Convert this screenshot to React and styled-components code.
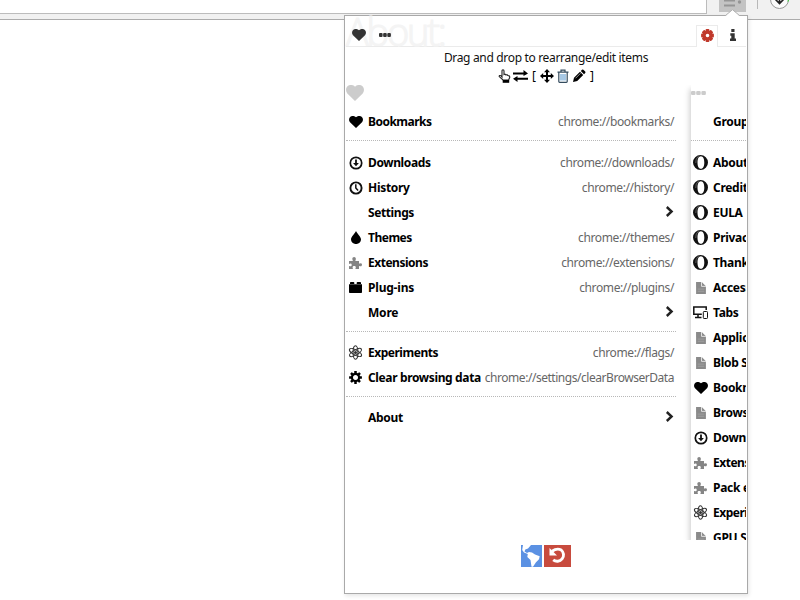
import React from "react";
import styled, { createGlobalStyle } from "styled-components";

const Global = createGlobalStyle`
  * { box-sizing: border-box; }
  body { margin: 0; background: #fff; overflow: hidden; }
`;

const Page = styled.div`
  width: 800px;
  height: 600px;
  overflow: hidden;
  position: relative;
  background: #fff;
  font: 12px/23px "Noto Sans", "Open Sans", sans-serif;
  color: #000;
`;
const Browser = styled.div`
  display: flex;
  height: 20px;
  background: #f1f1f1;
  border-bottom: 1px solid #acacac;
`;
const Address = styled.div`
  width: 707px;
  height: 14px;
  background: #fff;
  border: solid #bcbcbc;
  border-width: 0 1px 1px 0;
`;
const ToolIcons = styled.svg`
  display: block;
  width: 93px;
  height: 19px;
`;
const Popup = styled.div`
  position: absolute;
  left: 344px;
  top: 15px;
  width: 404px;
  height: 579px;
  background: #fff;
  border: 1px solid #a9a9a9;
  box-shadow: 1px 2px 4px rgba(0, 0, 0, 0.1);
  padding: 0 1px;
`;
const Pointer = styled.svg`
  position: absolute;
  left: 380px;
  top: -7px;
  display: block;
`;
const Header = styled.div`
  position: relative;
  display: flex;
  height: 31px;
`;
const Watermark = styled.div`
  position: absolute;
  left: 0;
  top: 0;
  font: 300 38px/30px "Open Sans", "Noto Sans", sans-serif;
  letter-spacing: -2.2px;
  -webkit-text-stroke: 1.2px #f4f4f4;
  color: #f4f4f4;
`;
const Tab = styled.div`
  position: relative;
  display: flex;
  justify-content: center;
  align-items: center;
  width: ${(p) => p.$w}px;
  height: ${(p) => (p.$active ? 22 : 31)}px;
  margin-top: ${(p) => (p.$active ? 9 : 0)}px;
  padding-top: ${(p) => (p.$active ? 0 : 8)}px;
  padding-bottom: ${(p) => (p.$active ? 2 : 0)}px;
  padding-left: ${(p) => p.$shift || 0}px;
  border: solid #ebebeb;
  border-width: ${(p) => (p.$active ? "1px 1px 0" : "0 0 1px")};
`;
const Spacer = styled.div`
  flex: 1;
  border-bottom: 1px solid #ebebeb;
`;
const Hint = styled.div`
  height: 19px;
  margin-top: 1px;
  line-height: 20px;
  text-align: center;
  color: #111;
  letter-spacing: ${(p) => p.$ls || 0}px;
`;
const Tools = styled.div`
  display: flex;
  justify-content: center;
  align-items: center;
  height: 18px;
  gap: 2px;
  padding-left: 2px;
  line-height: 16px;
  & > span { width: 8px; text-align: center; }
`;
const Lists = styled.div`
  display: flex;
  height: 455px;
  overflow: hidden;
`;
const List = styled.div`
  width: ${(p) => (p.$side ? 55 : 330)}px;
  margin-left: ${(p) => (p.$side ? 15 : 0)}px;
  flex: none;
  ${(p) => p.$side && "box-shadow: -1px 4px 6px rgba(0,0,0,.22);"}
`;
const ListHead = styled.div`
  height: 25px;
  padding-top: ${(p) => p.$top}px;
  svg { display: block; }
`;
const Row = styled.div`
  display: flex;
  align-items: center;
  height: 25px;
  padding: 0 2px 2px 0;
  white-space: nowrap;
`;
const IconBox = styled.span`
  width: 19px;
  height: 16px;
  flex: none;
  display: flex;
  justify-content: center;
  align-items: center;
  margin-right: 3px;
`;
const Label = styled.span`
  font-weight: 700;
  flex: 1 0 auto;
  letter-spacing: ${(p) => p.$ls}px;
`;
const Url = styled.span`
  color: #666;
  letter-spacing: ${(p) => p.$ls}px;
`;
const Divider = styled.div`
  height: ${(p) => p.$h}px;
  padding-top: 5px;
  &::before {
    content: "";
    display: block;
    border-top: 1px dotted #b8b8b8;
  }
`;
const Footer = styled.div`
  display: flex;
  justify-content: center;
  gap: 2px;
  padding: 5px 0 0;
  svg { display: block; }
`;

const Svg = ({ w = 14, h = 14, box, children, ...rest }) => (
  <svg width={w} height={h} viewBox={box || `0 0 ${w} ${h}`} fill="currentColor" {...rest}>{children}</svg>
);

const Heart = ({ w = 14, h = 12, color = "#000" }) => (
  <Svg w={w} h={h} box="0 0 14 12" preserveAspectRatio="none">
    <path fill={color} d="M7 1.3C5.5-.4 2.9-.4 1.4.8-.3 2.3-.4 4.600 1 6.300L7 12l6-5.700C14.400 4.600 14.300 2.300 12.600.8 11.100-.4 8.500-.4 7 1.300Z" />
  </Svg>
);
const Dots = ({ color, w = 12 }) => (
  <Svg w={w} h={4} box="0 0 12 4" preserveAspectRatio="none">
    {[0, 4.15, 8.3].map((x) => <rect key={x} x={x} y="0" width="3.600" height="4" rx="1" fill={color} />)}
  </Svg>
);
const Gear = ({ color = "#000", w = 13, round, hole = 2.2 }) => (
  <Svg w={w} h={w} box="-6.500 -6.500 13 13">
    <g fill={color}>
      {[0, 45, 90, 135, 180, 225, 270, 315].map((a) => (
        <rect key={a} x={round ? -1.9 : -1.25} y="-6.400" width={round ? 3.8 : 2.5} height="3.500" rx={round ? 0.9 : 0.2} transform={`rotate(${a})`} />
      ))}
      <path fillRule="evenodd" d={`M-4.700 0A4.700 4.700 0 1 0 4.700 0A4.700 4.700 0 1 0-4.700 0ZM${-hole} 0A${hole} ${hole} 0 1 0 ${hole} 0A${hole} ${hole} 0 1 0 ${-hole} 0Z`} />
    </g>
  </Svg>
);
const Info = () => (
  <Svg w={6} h={12}>
    <path fill="#333" d="M1.300 0h3.200v3h-3.200zM.3 4.300h4.400v5.200H6V12H0V9.500h1.300V6.700h-1z" />
  </Svg>
);
const Download = () => (
  <Svg>
    <circle cx="7" cy="7" r="5.700" fill="none" stroke="#111" strokeWidth="1.700" />
    <path fill="#111" d="M6.100 3.500h1.800v3.400h2L7 10.200 4.100 6.900h2z" />
  </Svg>
);
const Clock = () => (
  <Svg>
    <circle cx="7" cy="7" r="5.600" fill="none" stroke="#111" strokeWidth="1.900" />
    <path fill="none" stroke="#111" strokeWidth="1.500" d="M6.800 3.200V7l2.300 2.500" />
  </Svg>
);
const Drop = () => (
  <Svg w={10} h={13}>
    <path d="M5 0C5.600 2.200 10 5.500 10 8.500A4.700 4.500 0 0 1 5 13 4.700 4.500 0 0 1 0 8.500C0 5.500 4.400 2.200 5 0Z" />
  </Svg>
);
const Puzzle = () => (
  <Svg w={13} h={12}>
    <path fill="#858585" d="M0 4h3.700c.5-.6-.4-1.100-.4-2C3.300.7 4.100 0 5.100 0s1.800.7 1.800 2c0 .9-.8 1.400-.4 2H10v2.500c.6.400.9-.3 1.600-.3.900 0 1.400.7 1.400 1.600S12.500 9.300 11.600 9.300c-.8 0-1-.7-1.600-.3v3H6.500c-.3-.6.300-1 .3-1.600 0-.8-.7-1.300-1.600-1.300s-1.600.5-1.600 1.300c0 .6.600 1 .2 1.600H0V9c.6-.3.900.2 1.500.2.700 0 1.200-.5 1.200-1.300s-.5-1.300-1.200-1.300C.9 6.600.6 7.100 0 6.800Z" />
  </Svg>
);
const Plug = () => (
  <Svg w={13} h={11}>
    <path d="M1 2V.8Q1 0 1.800 0h2.700q.8 0 .8.800V2h2.400V.8Q7.700 0 8.500 0h2.700q.8 0 .8.800V2h1v8.200q0 .8-.8.800H.8Q0 11 0 10.200V2Z" />
    <path d="M0 2.500h13" stroke="#777" strokeWidth=".6" />
  </Svg>
);
const Atom = () => (
  <Svg w={15} h={15} box="-7 -7 14 14">
    <g fill="none" stroke="#333" strokeWidth="1.050">
      {[0, 60, 120].map((a) => <ellipse key={a} rx="2.300" ry="6.300" transform={`rotate(${a})`} />)}
    </g>
    <circle r="1.400" fill="#333" />
  </Svg>
);
const Opera = () => (
  <Svg w={15} h={15}>
    <path fill="#111" fillRule="evenodd" d="M7.500 0a7.500 7.500 0 1 1 0 15 7.500 7.500 0 0 1 0-15Zm.4 1.200C5.600 1.200 4.500 4 4.500 7.500s1.100 6.300 3.400 6.300 3.400-2.800 3.400-6.300-1.100-6.300-3.400-6.300Z" />
    <path fill="none" stroke="#fff" strokeWidth=".9" d="M5.500 1Q2.300 4 2.800 8" opacity=".35" />
  </Svg>
);
const Doc = () => (
  <Svg w={10} h={12} box="0 0 9 11">
    <path fill="#8a8a8a" d="M0 0h5.200L9 3.800V11H0Z" />
    <path fill="none" stroke="#fff" strokeWidth=".7" d="M5 0v4h4" />
    <path stroke="#aaa" strokeWidth=".6" d="M1.500 6.500h6M1.500 8.500h6" />
  </Svg>
);
const Devices = () => (
  <Svg w={15} h={13}>
    <path fill="none" stroke="#111" strokeWidth="1.500" d="M13.200 4V1H.8v7.300h8M5 8.500v2.800M2 11.500h6.500" />
    <rect x="10.300" y="5.500" width="4.200" height="7" rx=".8" fill="#fff" stroke="#111" />
  </Svg>
);
const Chevron = () => (
  <Svg w={9} h={13}>
    <path d="M1.800 1 6.600 5.500 1.800 10" fill="none" stroke="#222" strokeWidth="2.400" />
  </Svg>
);

const icons = { heart: <Heart />, down: <Download />, clock: <Clock />, drop: <Drop />, puzzle: <Puzzle />, plug: <Plug />, atom: <Atom />, gear: <Gear hole={2.5} />, opera: <Opera />, doc: <Doc />, devices: <Devices /> };

const mainItems = [
  ["heart", "Bookmarks", "chrome://bookmarks/", -0.52], 16,
  ["down", "Downloads", "chrome://downloads/", -0.38],
  ["clock", "History", "chrome://history/"],
  [null, "Settings", undefined, -0.4],
  ["drop", "Themes", "chrome://themes/", -0.5],
  ["puzzle", "Extensions", "chrome://extensions/", -0.48],
  ["plug", "Plug-ins", "chrome://plugins/", -0.2],
  [null, "More", undefined, -0.2], 15,
  ["atom", "Experiments", "chrome://flags/", -0.48],
  ["gear", "Clear browsing data", "chrome://settings/clearBrowserData", -0.36], 15,
  [null, "About"],
];
const groupItems = [
  [null, "Groups", ""], 16,
  ["opera", "About Opera", ""], ["opera", "Credits", ""], ["opera", "EULA", ""],
  ["opera", "Privacy", ""], ["opera", "Thanks", ""], ["doc", "Accessibility", ""],
  ["devices", "Tabs", ""], ["doc", "Application", ""], ["doc", "Blob Storage", ""],
  ["heart", "Bookmarks", ""], ["doc", "Browser", ""], ["down", "Downloads", ""],
  ["puzzle", "Extensions", "", -0.48], ["puzzle", "Pack extension", ""],
  ["atom", "Experiments", "", -0.48], ["doc", "GPU Sandbox", ""],
];

const Items = ({ items }) =>
  items.map((it, i) =>
    typeof it === "number" ? <Divider key={i} $h={it} /> : (
      <Row key={i}>
        <IconBox>{it[0] && icons[it[0]]}</IconBox>
        <Label $ls={it[3] ?? -0.3}>{it[1]}</Label>
        {it[2] === undefined ? <Chevron /> : <Url $ls={it[2].length > 30 ? -0.46 : -0.38}>{it[2]}</Url>}
      </Row>
    )
  );

export default function App() {
  return (
    <Page>
      <Global />
      <Browser>
        <Address />
        <ToolIcons>
          <rect x="12" width="27" height="12" fill="#c3c3c3" />
          <path d="M17 0.500h11M17 5.500h11" stroke="#959595" strokeWidth="2" />
          <circle cx="32.500" cy="2" r="1.700" fill="#959595" />
          <path d="M50.500 0v9" stroke="#b8b8b8" />
          <circle cx="72.500" cy="-.5" r="9" fill="#fafafa" stroke="#999" />
          <path d="M81.500-.5a9 9 0 0 1-.5 2" stroke="#1bd51b" fill="none" />
          <path d="M72.500 0v4M68.500-.5l4 4 4-4" stroke="#222" strokeWidth="1.600" fill="none" />
        </ToolIcons>
      </Browser>
      <Popup>
        <Pointer width="15" height="8"><path d="M0 7.500 7.500.5 15 7.500V8H0Z" fill="#fff" /><path d="M.5 6.500 7.500.7 14.500 6.500" fill="none" stroke="#b0b0b0" /></Pointer>
        <Header>
          <Watermark>About:</Watermark>
          <Tab $w={25}><Heart w={14} h={12} color="#333" /></Tab>
          <Tab $w={27}><Dots color="#333" /></Tab>
          <Spacer />
          <Tab $w={22} $active><Gear w={13} round color="#c0392b" hole={1.8} /></Tab>
          <Tab $w={28} $shift={2}><Info /></Tab>
        </Header>
        <Hint $ls={-0.33}>Drag and drop to rearrange/edit items</Hint>
        <Tools>
          <Svg w={13} h={14}><path d="M4 8V2Q4 .8 5 .8T6 2v3.500Q7.500 4.700 8 6q1.300-.6 1.800.5Q12 6.500 11.700 8.500L10.600 11H5L1.200 7.600Q1 5.800 3 6.800L4 8Z" fill="#fff" stroke="#222" strokeWidth="1.100" /><path d="M4.700 11h6.500v2.800H4.700z" /></Svg>
          <Svg w={15} h={12}><path d="M0 2.500h10.500V0L15 3.500 10.500 6V4.500H0ZM15 7.700H4.500V6L0 8.700 4.500 12V9.700H15Z" /></Svg>
          <span>[</span>
          <Svg w={14} h={14}><path d="M7 0l3 3.200H8v2.800h2.800V4L14 7l-3.200 3V8H8v2.800h2L7 14l-3-3.200h2V8H3.200v2L0 7l3.200-3v2H6V3.200H4Z" /></Svg>
          <Svg w={14} h={14}><path d="M1.500 3.200h11M5 3V1.200h4V3M2.800 3.500v9q0 .8.800.8h6.800q.8 0 .8-.8v-9" fill="none" stroke="#334b5e" strokeWidth="1.200" /><path d="M5 5v6.500M7 5v6.500M9 5v6.500" stroke="#5d9bd0" strokeWidth="1.100" /></Svg>
          <Svg w={14} h={14}><path d="M1 13l1-4.200 6-6L11.200 6l-6 6ZM8.800 2 10 .8q.7-.6 1.400 0l1.800 1.800q.6.700 0 1.400L12 5.200Z" /><path d="M3.500 9.300 8.500 4.300" stroke="#fff" strokeWidth=".6" /></Svg>
          <span>]</span>
        </Tools>
        <Lists>
          <List>
            <ListHead $top={0}><Heart w={18} h={16} color="#ccc" /></ListHead>
            <Items items={mainItems} />
          </List>
          <List $side>
            <ListHead $top={6}><Dots color="#ccc" w={15} /></ListHead>
            <Items items={groupItems} />
          </List>
        </Lists>
        <Footer>
          <Svg w={21} h={22}><path fill="#5b91e3" d="M0 0h21v22H0z" /><path fill="#fff" d="M2 0h8L7 3.500 4.300 4.500 3.500 6.500 6 8l2-1 3 .5 3 2 4.700 1.700-.7 3-3 3-3 4.500h-1.500L9.500 15 6.300 12l.5-3L3 7.500 1.200 5Z" /></Svg>
          <Svg w={27} h={22}><path fill="#c84b3e" d="M0 0h27v22H0z" /><path fill="none" stroke="#fff" strokeWidth="2.900" d="M8 6.300Q13 2.800 17.200 5a6 6 0 1 1-8 9.800" /><path fill="#fff" d="M5.500 3v7.500H13Z" /></Svg>
        </Footer>
      </Popup>
    </Page>
  );
}
